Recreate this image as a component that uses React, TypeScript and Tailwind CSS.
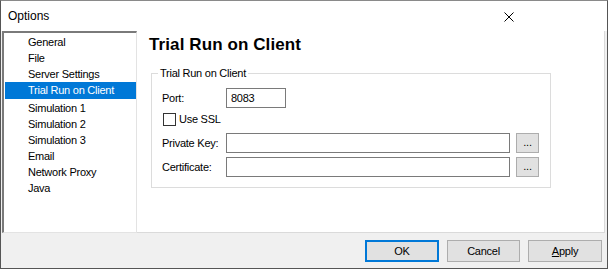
const ITEMS = [
  'General',
  'File',
  'Server Settings',
  'Trial Run on Client',
  'Simulation 1',
  'Simulation 2',
  'Simulation 3',
  'Email',
  'Network Proxy',
  'Java',
]

const SELECTED = 'Trial Run on Client'

function BrowseButton() {
  return (
    <button className="w-[23px] h-[20px] bg-[#e1e1e1] border border-[#adadad] flex items-end justify-center pb-[4px] text-[11px] leading-none text-black">
      ...
    </button>
  )
}

function Field({ label, value = '', width }: { label: string; value?: string; width: string }) {
  return (
    <div className="flex items-center">
      <span className="w-[64px] whitespace-nowrap text-black">{label}</span>
      <div className={`${width} h-[20px] bg-white border border-[#7a7a7a] px-[4px] flex items-center`}>{value}</div>
    </div>
  )
}

export default function App() {
  return (
    <div
      className="w-[608px] h-[269px] bg-[#f0f0f0] border border-[#555555] border-t-[#8a8a8a] flex flex-col text-[11px] tracking-[-0.25px] text-black select-none"
      style={{ fontFamily: '"Liberation Sans", Arial, sans-serif' }}
    >
      {/* Title bar */}
      <div className="h-[30px] bg-white flex items-center justify-between pl-[7px] pr-[93px] shrink-0">
        <span className="text-[12px] tracking-normal">Options</span>
        <svg width="10" height="10" viewBox="0 0 10 10" className="mt-[1px]">
          <path d="M0.5 0.5 L9.5 9.5 M9.5 0.5 L0.5 9.5" stroke="#000" strokeWidth="1" />
        </svg>
      </div>

      {/* Body */}
      <div className="flex pl-[1px] pr-[2px] h-[202px]">
        {/* Tree list */}
        <div className="w-[135px] h-[202px] bg-white border-l-2 border-t-2 border-l-[#7a7a7a] border-t-[#7a7a7a] border-r border-b border-r-[#e3e3e3] border-b-[#e3e3e3] pt-[1px] pl-[1px]">
          {ITEMS.map((item) =>
            item === SELECTED ? (
              <div key={item} className="h-[17px] mb-[1px] bg-[#0078d7] text-white pl-[23px] leading-[17px] whitespace-nowrap">
                {item}
              </div>
            ) : (
              <div key={item} className="h-[16px] pl-[23px] leading-[16px] whitespace-nowrap">
                {item}
              </div>
            )
          )}
        </div>

        {/* Page */}
        <div className="flex-1 bg-white border-r border-b border-[#dadada] pl-[12px] pt-[4px]">
          <h1 className="text-[17px] font-bold leading-[20px] tracking-[0.1px]">Trial Run on Client</h1>

          <fieldset className="relative mt-[18px] ml-[2px] w-[400px] h-[115px] border border-[#dcdcdc] pl-[10px] pt-[14px]">
            <span className="absolute -top-[9px] left-[6px] bg-white px-[2px] leading-[16px] whitespace-nowrap">Trial Run on Client</span>

            <Field label="Port:" value="8083" width="w-[60px]" />

            <label className="flex items-center gap-[3px] mt-[5px] ml-[1px] h-[13px]">
              <span className="w-[13px] h-[13px] border border-[#333] bg-white" />
              <span>Use SSL</span>
            </label>

            <div className="mt-[7px] flex items-center gap-[6px]">
              <Field label="Private Key:" width="w-[284px]" />
              <BrowseButton />
            </div>
            <div className="mt-[4px] flex items-center gap-[6px]">
              <Field label="Certificate:" width="w-[284px]" />
              <BrowseButton />
            </div>
          </fieldset>
        </div>
      </div>

      {/* Buttons */}
      <div className="flex justify-end gap-[8px] pr-[5px] pt-[7px]">
        <button className="w-[74px] h-[22px] bg-[#e1e1e1] border-2 border-[#0078d7]">OK</button>
        <button className="w-[73px] h-[22px] bg-[#e1e1e1] border border-[#adadad]">Cancel</button>
        <button className="w-[74px] h-[22px] bg-[#e1e1e1] border border-[#adadad]">
          <span className="underline">A</span>pply
        </button>
      </div>
    </div>
  )
}
